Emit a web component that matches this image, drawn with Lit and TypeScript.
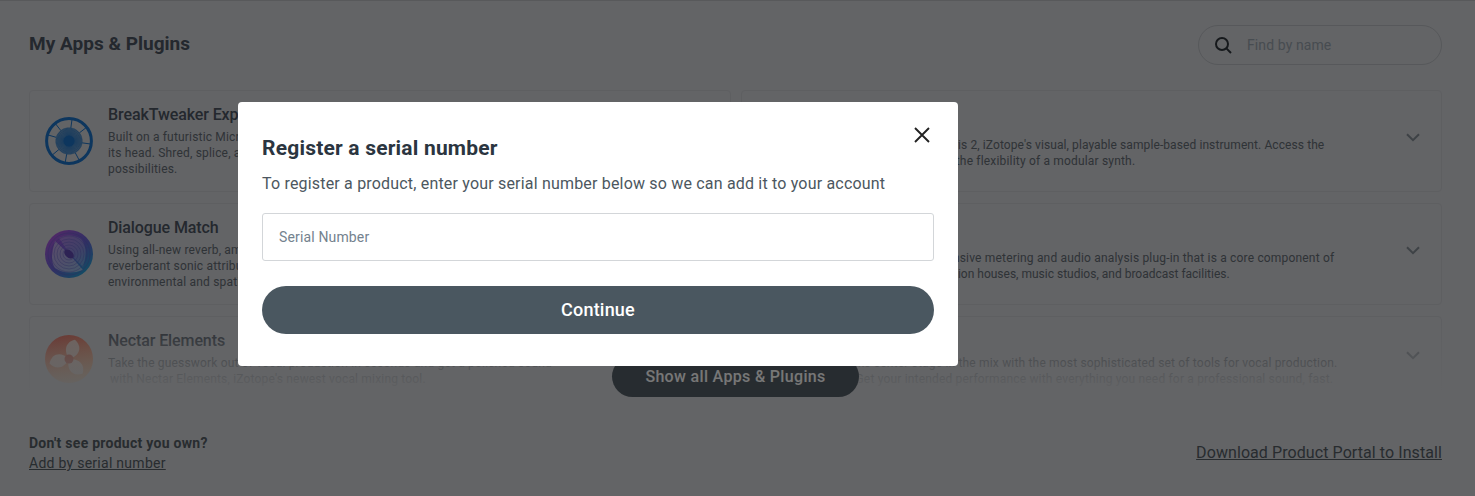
import { LitElement, html, css, svg } from "lit";
import { customElement } from "lit/decorators.js";

type Line = { text: string; indent?: number; spacing?: number };
type Item = { title: string; lines: Line[]; icon?: number; short?: boolean };

const LEFT: Item[] = [
  { title: "BreakTweaker Expanded", icon: 0, lines: [
    { text: "Built on a futuristic Micro-Edit Engine, BreakTweaker turns beat making on" },
    { text: "its head. Shred, splice, and sequence sounds with endless rhythmic" },
    { text: "possibilities." } ] },
  { title: "Dialogue Match", icon: 1, lines: [
    { text: "Using all-new reverb, ambience and EQ modules, match the tonal and" },
    { text: "reverberant sonic attributes of your dialogue recordings across" },
    { text: "environmental and spatial contexts." } ] },
  { title: "Nectar Elements", icon: 2, short: true, lines: [
    { text: "Take the guesswork out of vocal production in seconds and get a polished sound" },
    { text: "with Nectar Elements, iZotope's newest vocal mixing tool.", indent: 2 } ] },
];
const RIGHT: Item[] = [
  { title: "Iris 2", lines: [
    { text: "Explore new sound with Iris 2, iZotope's visual, playable sample-based instrument. Access the", spacing: 0.09 },
    { text: "spectral tools and all of the flexibility of a modular synth.", indent: 4 } ] },
  { title: "Insight 2", lines: [
    { text: "Insight 2 is a comprehensive metering and audio analysis plug-in that is a core component of", indent: 5 },
    { text: "workflows at post-production houses, music studios, and broadcast facilities.", indent: -1, spacing: 0 } ] },
  { title: "Nectar 3", short: true, lines: [
    { text: "Take center stage in the mix with the most sophisticated set of tools for vocal production.", indent: 25 },
    { text: "Get your intended performance with everything you need for a professional sound, fast.", indent: 36 } ] },
];

const range = (n: number) => Array.from({ length: n }, (_, i) => i);

function lineStyle(l: Line) {
  const parts: string[] = [];
  if (l.indent) parts.push(`text-indent:${l.indent}px`);
  if (l.spacing !== undefined) parts.push(`letter-spacing:${l.spacing}px`);
  return parts.join(";");
}

function wheelIcon() {
  return svg`<svg class="logo" viewBox="0 0 48 48">
    <circle cx="24" cy="24" r="22.4" fill="none" stroke="#1a6cbc" stroke-width="3"/>
    ${[8, 62, 100, 140, 196, 232, 278, 322].map((a) => {
      const r = (a * Math.PI) / 180;
      return svg`<line x1=${24 + 13 * Math.cos(r)} y1=${24 + 13 * Math.sin(r)} x2=${24 + 22 * Math.cos(r)} y2=${24 + 22 * Math.sin(r)} stroke="#1a6cbc" stroke-width="1"/>`;
    })}
    <circle cx="24" cy="24" r="13.5" fill="#6a94bc"/>
    ${range(60).map((i) => {
      const r = (i * 6 * Math.PI) / 180;
      return svg`<line x1="24" y1="24" x2=${24 + 13.5 * Math.cos(r)} y2=${24 + 13.5 * Math.sin(r)} stroke="#1a6cbc" stroke-width=".5"/>`;
    })}
    <circle cx="24" cy="24" r="5.5" fill="#1a6cbc"/>
  </svg>`;
}

function matchIcon() {
  return svg`<svg class="logo" viewBox="0 0 48 48">
    <defs><linearGradient id="dm" x1="0.15" y1="0.1" x2="0.85" y2="0.9">
      <stop offset="0" stop-color="#a050d0"/><stop offset=".55" stop-color="#6060c8"/><stop offset="1" stop-color="#2498c8"/>
    </linearGradient></defs>
    <circle cx="24" cy="24" r="24" fill="url(#dm)"/>
    <path d="M10 11 L25 25 L38 40 Q22 46 10 38 Q4 30 10 11Z" fill="#c8c8dc" fill-opacity=".6"/>
    <path d="M38 37 L24 23 L14 8 Q24 2 36 9 Q44 18 38 37Z" fill="#c8c8dc" fill-opacity=".32"/>
    ${[6, 9, 12, 15, 18, 21].map((r) => svg`<circle cx="24" cy="24" r=${r} fill="none" stroke="#5858b8" stroke-opacity=".6" stroke-width=".7"/>`)}
    <ellipse cx="24" cy="24" rx="5.5" ry="3.5" transform="rotate(40 24 24)" fill="#5a44a8"/>
  </svg>`;
}

function swirlIcon() {
  return svg`<svg class="logo" viewBox="0 0 48 48">
    <defs><linearGradient id="ne" x1="0.3" y1="0" x2="0.6" y2="1">
      <stop offset="0" stop-color="#d85a4c"/><stop offset="1" stop-color="#f0b070"/>
    </linearGradient></defs>
    <circle cx="24" cy="24" r="24" fill="url(#ne)"/>
    ${[20, 140, 260].map((a) => svg`<path d="M24 24 C17 19 14 10 23 4 C33 8 33 18 24 24Z" fill="#e6d6ce" fill-opacity=".85" transform="rotate(${a} 24 24)"/>`)}
    <circle cx="24" cy="24" r="4.5" fill="#d0604c"/>
  </svg>`;
}

const ICONS = [wheelIcon, matchIcon, swirlIcon];

@customElement("app-root")
export class AppRoot extends LitElement {
  static styles = css`
    :host {
      display: block;
      position: relative;
      width: 1475px;
      height: 496px;
      overflow: hidden;
      background: #c6c8cc;
      font-family: Roboto, sans-serif;
    }
    .page {
      display: flex;
      flex-direction: column;
      height: 496px;
      box-sizing: border-box;
      padding: 25px 33px 0 29px;
    }
    .head {
      display: flex;
      justify-content: space-between;
      align-items: center;
      height: 40px;
      margin-bottom: 25px;
    }
    h1 {
      margin: -2px 0 0;
      font-size: 19px;
      line-height: 40px;
      font-weight: 700;
      letter-spacing: 0.02px;
      color: #48505c;
    }
    .search {
      width: 244px;
      height: 40px;
      box-sizing: border-box;
      display: flex;
      align-items: center;
      gap: 14px;
      padding-left: 15px;
      border: 1px solid #aeb1b6;
      border-radius: 20px;
      font-size: 14px;
      letter-spacing: 0.1px;
      color: #8f98a2;
    }
    .search svg { width: 19px; height: 19px; flex: none; }
    .list {
      position: relative;
      height: 307px;
      overflow: hidden;
    }
    .grid {
      display: grid;
      grid-template-columns: 1fr 1fr;
      column-gap: 10px;
      row-gap: 11px;
    }
    .card {
      height: 102px;
      box-sizing: border-box;
      display: flex;
      align-items: center;
      padding: 0 21px 0 15px;
      border: 1px solid #bcbec3;
      border-radius: 4px;
    }
    .card.short { height: 86px; }
    .card.short .body { align-self: flex-start; padding-top: 15px; }
    .logo { width: 48px; height: 48px; flex: none; margin-right: 15px; }
    .spacer { width: 48px; height: 48px; flex: none; margin-right: 15px; }
    .body { flex: 1; min-width: 0; overflow: hidden; }
    .body h2 {
      margin: -1px 0 4px;
      font-size: 16px;
      line-height: 20px;
      font-weight: 500;
      letter-spacing: -0.1px;
      color: #48505c;
    }
    .body div {
      white-space: nowrap;
      font-size: 12px;
      line-height: 16px;
      letter-spacing: 0.18px;
      color: #5e666e;
    }
    .chev { width: 14px; height: 9px; flex: none; margin: -8px 0 0 14px; }
    .fade {
      position: absolute;
      left: 0;
      right: 0;
      bottom: 0;
      height: 81px;
      background: linear-gradient(to bottom, rgba(198, 200, 204, 0), #c6c8cc 77px);
    }
    .more {
      position: absolute;
      left: 583px;
      top: 266px;
      width: 247px;
      height: 41px;
      border: 0;
      padding: 0;
      border-radius: 21px;
      background: #4e5860;
      color: #eee;
      font-family: Roboto, sans-serif;
      font-size: 16px;
      font-weight: 500;
      letter-spacing: 0.33px;
    }
    .foot {
      display: flex;
      justify-content: space-between;
      align-items: center;
      margin-top: 38px;
      height: 36px;
      font-size: 14px;
      line-height: 20px;
    }
    .foot b { display: block; font-weight: 700; letter-spacing: 0.27px; color: #50585f; }
    .foot a { display: block; letter-spacing: 0.27px; color: #50585f; text-decoration: underline; }
    .foot a.dl {
      font-size: 16px;
      letter-spacing: 0.08px;
    }
    .overlay {
      position: absolute;
      inset: 0;
      border-top: 1px solid #58595b;
      box-sizing: border-box;
      background: rgba(0, 0, 0, 0.5);
      padding: 101px 0 0 238px;
    }
    .modal {
      position: relative;
      width: 720px;
      height: 264px;
      box-sizing: border-box;
      padding: 32px 24px 0;
      background: #fff;
      border-radius: 4px;
    }
    .close { position: absolute; top: 25px; right: 28px; width: 16px; height: 16px; }
    .modal h3 {
      margin: 0;
      font-size: 21px;
      line-height: 28px;
      font-weight: 700;
      letter-spacing: 0.2px;
      color: #2b3540;
    }
    .modal p {
      margin: 12px 0 0;
      font-size: 16px;
      line-height: 20px;
      letter-spacing: 0.185px;
      color: #4c5760;
    }
    .input {
      margin-top: 19px;
      height: 48px;
      box-sizing: border-box;
      display: flex;
      align-items: center;
      padding-left: 16px;
      border: 1px solid #d3d6d9;
      border-radius: 3px;
      font-size: 14px;
      letter-spacing: 0.15px;
      color: #74828e;
    }
    .go {
      display: block;
      margin-top: 25px;
      width: 100%;
      height: 48px;
      border: 0;
      padding: 0 0 2px;
      border-radius: 24px;
      background: #4a5760;
      color: #fff;
      font-family: Roboto, sans-serif;
      font-size: 18px;
      font-weight: 500;
      letter-spacing: 0.2px;
    }
  `;

  private card(item: Item) {
    return html`<div class="card ${item.short ? "short" : ""}">
      ${item.icon !== undefined ? ICONS[item.icon]() : html`<span class="spacer"></span>`}
      <div class="body">
        <h2>${item.title}</h2>
        ${item.lines.map((l) => html`<div style=${lineStyle(l)}>${l.text}</div>`)}
      </div>
      <svg class="chev" viewBox="0 0 14 9"><path d="M1 1.2 L7 7.2 L13 1.2" fill="none" stroke="#7c848c" stroke-width="2"/></svg>
    </div>`;
  }

  render() {
    const rows = range(3).flatMap((i) => [LEFT[i], RIGHT[i]]);
    return html`
      <div class="page">
        <div class="head">
          <h1>My Apps &amp; Plugins</h1>
          <div class="search">
            <svg viewBox="0 0 19 19"><circle cx="8" cy="8" r="6" fill="none" stroke="#2c3238" stroke-width="2"/><path d="M12.4 12.4 L17 17" stroke="#2c3238" stroke-width="2"/></svg>
            <span>Find by name</span>
          </div>
        </div>
        <div class="list">
          <div class="grid">${rows.map((r) => this.card(r))}</div>
          <div class="fade"></div>
          <button class="more">Show all Apps &amp; Plugins</button>
        </div>
        <div class="foot">
          <div><b>Don't see product you own?</b><a>Add by serial number</a></div>
          <a class="dl">Download Product Portal to Install</a>
        </div>
      </div>
      <div class="overlay">
        <div class="modal">
          <svg class="close" viewBox="0 0 16 16"><path d="M1 1 L15 15 M15 1 L1 15" fill="none" stroke="#222" stroke-width="1.9"/></svg>
          <h3>Register a serial number</h3>
          <p>To register a product, enter your serial number below so we can add it to your account</p>
          <div class="input">Serial Number</div>
          <button class="go">Continue</button>
        </div>
      </div>
    `;
  }
}
